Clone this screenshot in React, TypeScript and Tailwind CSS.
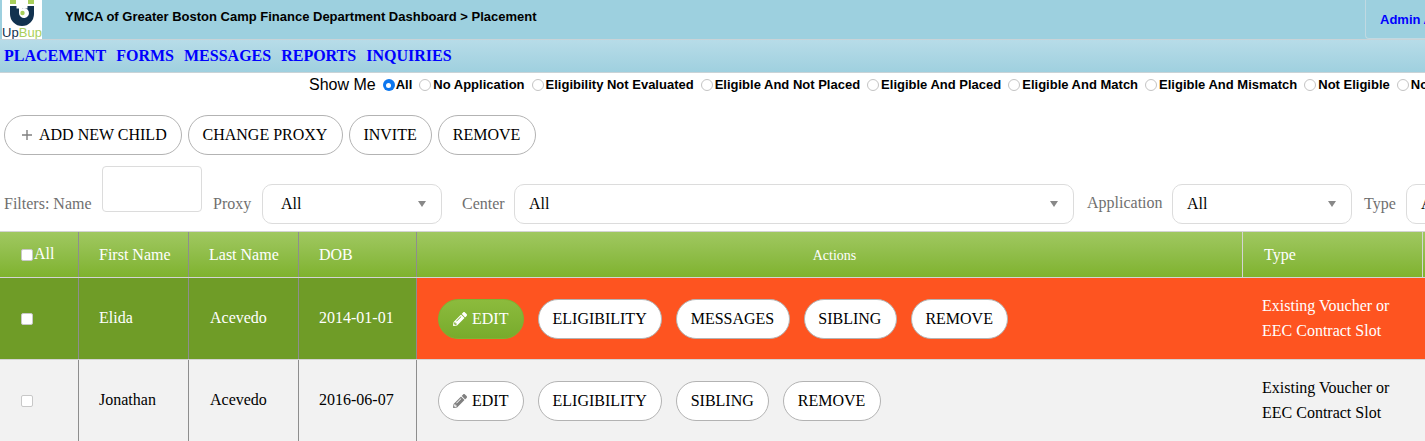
import { FaPencilAlt } from "react-icons/fa";

const sans = "font-['Liberation_Sans',Arial,sans-serif]";
const serif = "font-['Liberation_Serif','Times_New_Roman',serif]";

const navLinks = ["PLACEMENT", "FORMS", "MESSAGES", "REPORTS", "INQUIRIES"];
const showOptions = [
  "No Application",
  "Eligibility Not Evaluated",
  "Eligible And Not Placed",
  "Eligible And Placed",
  "Eligible And Match",
  "Eligible And Mismatch",
  "Not Eligible",
  "Not Placed",
];

const gridCols = "grid grid-cols-[79px_110px_110px_118px_826px_180px_200px] w-[1623px]";

const Logo = () => (
  <div className="w-10 h-[39px] ml-[2px] bg-white flex flex-col items-center overflow-hidden shrink-0">
    <svg width="26" height="26" viewBox="0 0 26 26" className="shrink-0">
      <path d="M1 0h6v4H1zM19 0h6v4h-6z" fill="#a9cf5b" />
      <path d="M1 6h6.5v2.5h11V6H25v8a12 12 0 0 1-24 0z" fill="#12324f" />
      <path d="M10 3h3v5.5a5 5 0 1 1-3 4.6z" fill="#ffffff" />
      <circle cx="13.5" cy="13" r="2.2" fill="#a9cf5b" />
    </svg>
    <div className={`${sans} text-[13px] leading-[12px] mt-[1px] whitespace-nowrap`}>
      <span className="text-[#12324f]">Up</span>
      <span className="text-[#a9cf5b]">Bup</span>
    </div>
  </div>
);

const Pill = ({ children, active, className = "pl-[13.5px] pr-[14.5px]" }: { children: React.ReactNode; active?: boolean; className?: string }) => (
  <button
    type="button"
    className={`h-10 rounded-[20px] border flex items-center gap-[5px] text-base whitespace-nowrap ${className} ${serif} ${
      active
        ? "border-[#7fb232] text-white bg-gradient-to-b from-[#8cbb3d] to-[#78ab2c]"
        : "border-[#b3b3b3] text-black bg-white"
    }`}
  >
    {children}
  </button>
);

const FilterSelect = ({ width, inset = "pl-[14px]" }: { width: string; inset?: string }) => (
  <div className={`${width} ${inset} mt-[18px] h-10 shrink-0 rounded-[10px] border border-[#dcdcdc] bg-white pr-[15px] flex items-center justify-between text-base text-black`}>
    <span>All</span>
    <span className="w-0 h-0 border-x-[4px] border-x-transparent border-t-[6px] border-t-[#888888]" />
  </div>
);

const Radio = ({ checked }: { checked?: boolean }) =>
  checked ? (
    <span className="w-3 h-3 rounded-full bg-[#0b76ef] flex items-center justify-center shrink-0">
      <span className="w-[5px] h-[5px] rounded-full bg-white" />
    </span>
  ) : (
    <span className="w-3 h-3 rounded-full border border-[#c4c4c4] bg-white shrink-0" />
  );

const Check = () => <span className="w-3 h-3 rounded-[2px] border border-[#c8c8c8] bg-white inline-block shrink-0" />;

const Row = ({
  first,
  last,
  dob,
  highlighted,
  actions,
}: {
  first: string;
  last: string;
  dob: string;
  highlighted?: boolean;
  actions: string[];
}) => {
  const left = highlighted ? "bg-[#6f9c27] text-white" : "bg-[#f2f2f2] text-black";
  const right = highlighted ? "bg-[#fe5420] text-white" : "bg-[#f2f2f2] text-black";
  const line = "border-r border-[#8e8e8e]";
  return (
    <div className={`${gridCols} h-[82px] border-b border-[#d4d4d4] text-base ${serif}`}>
      <div className={`${left} ${line} flex items-center pl-[21px]`}>
        <Check />
      </div>
      <div className={`${left} ${line} flex items-center pl-5 pb-[2px]`}>{first}</div>
      <div className={`${left} ${line} flex items-center pl-[21px] pb-[2px]`}>{last}</div>
      <div className={`${left} ${line} flex items-center pl-5 pb-[2px]`}>{dob}</div>
      <div className={`${right} flex items-center pl-[21px] gap-[14px]`}>
        <Pill active={highlighted} className="pl-[14px] pr-[14px] w-[86px]">
          <FaPencilAlt className={`w-[14px] h-[14px] shrink-0 ${highlighted ? "text-white" : "text-[#808080]"}`} />
          EDIT
        </Pill>
        {actions.map((a) => (
          <Pill key={a}>{a}</Pill>
        ))}
      </div>
      <div className={`${right} flex items-center pl-[19px] pb-[2px] leading-[25px]`}>
        <div>
          Existing Voucher or
          <br />
          EEC Contract Slot
        </div>
      </div>
      <div className={right} />
    </div>
  );
};

export default function App() {
  return (
    <div className={`w-[1425px] h-[441px] overflow-hidden bg-white ${sans}`}>
      <div className="h-[39px] bg-[#9dd0df] flex">
        <Logo />
        <div className="ml-[23px] pt-[9px] text-[13px] leading-[15px] font-bold text-black whitespace-nowrap">
          YMCA of Greater Boston Camp Finance Department Dashboard &gt; Placement
        </div>
        <div className="ml-auto w-[60px] border border-r-0 border-t-0 border-[#c0d9e2] rounded-bl-[4px] pl-[14px] pt-[12px] text-[13px] leading-[15px] font-bold text-[#0000ff] whitespace-nowrap overflow-hidden">
          Admin Account
        </div>
      </div>
      <div className={`h-[34px] border-t border-b border-[#c9d3d7] bg-gradient-to-b from-[#b7dce8] to-[#9fd0df] flex items-center pl-1 gap-[10px] text-base font-bold text-[#0000ff] ${serif}`}>
        {navLinks.map((l) => (
          <span key={l}>{l}</span>
        ))}
      </div>
      <div className="h-6 pl-[309px] flex items-center whitespace-nowrap text-[13px] font-bold text-black">
        <span className="text-base font-normal mr-[7px]">Show Me</span>
        <Radio checked />
        <span className="ml-[1px] mr-[7px]">All</span>
        {showOptions.map((o) => (
          <span key={o} className="flex items-center mr-[7px]">
            <Radio />
            <span className="ml-[2px]">{o}</span>
          </span>
        ))}
      </div>
      <div className="mt-[18px] pl-1 flex gap-[6px]">
        <Pill className="pl-[14px] pr-[14px] w-[178px]">
          <svg width="12" height="12" viewBox="0 0 12 12" className="ml-[2px] mr-[1px] shrink-0">
            <path d="M6 1v10M1 6h10" stroke="#808080" strokeWidth="1.4" />
          </svg>
          ADD NEW CHILD
        </Pill>
        <Pill>CHANGE PROXY</Pill>
        <Pill>INVITE</Pill>
        <Pill>REMOVE</Pill>
      </div>
      <div className={`mt-[11px] h-[65px] pl-1 flex items-start text-[#6f6f6f] text-base whitespace-nowrap ${serif}`}>
        <span className="mt-[26px] w-[98px] shrink-0">Filters: Name</span>
        <div className="w-[100px] h-[46px] shrink-0 rounded-[4px] border border-[#dcdcdc]" />
        <span className="ml-[11px] mt-[26px] w-[49px] shrink-0">Proxy</span>
        <FilterSelect width="w-[180px]" inset="pl-[18px]" />
        <span className="ml-5 mt-[26px] w-[52px] shrink-0">Center</span>
        <FilterSelect width="w-[560px]" />
        <span className="ml-[13px] mt-[25px] w-[85px] shrink-0">Application</span>
        <FilterSelect width="w-[180px]" />
        <span className="ml-3 mt-[26px] w-[42px] shrink-0">Type</span>
        <FilterSelect width="w-[180px]" />
      </div>
      <div className={`${gridCols} h-[47px] border-t border-b border-[#d4d4d4] bg-gradient-to-b from-[#a0c860] to-[#7fb22d] text-white text-base ${serif}`}>
        <div className="border-r border-[#8e8e8e] flex items-center pl-[21px]">
          <Check />
          <span className="-mt-[2px] ml-[1px]">All</span>
        </div>
        <div className="border-r border-[#8e8e8e] flex items-center pl-5">First Name</div>
        <div className="border-r border-[#8e8e8e] flex items-center pl-5">Last Name</div>
        <div className="border-r border-[#8e8e8e] flex items-center pl-5">DOB</div>
        <div className="border-r border-[#d4d4d4] flex items-center justify-center text-sm pt-[2px] pl-[10px]">Actions</div>
        <div className="border-r border-[#d4d4d4] flex items-center pl-[21px]">Type</div>
        <div />
      </div>
      <Row first="Elida" last="Acevedo" dob="2014-01-01" highlighted actions={["ELIGIBILITY", "MESSAGES", "SIBLING", "REMOVE"]} />
      <Row first="Jonathan" last="Acevedo" dob="2016-06-07" actions={["ELIGIBILITY", "SIBLING", "REMOVE"]} />
    </div>
  );
}
